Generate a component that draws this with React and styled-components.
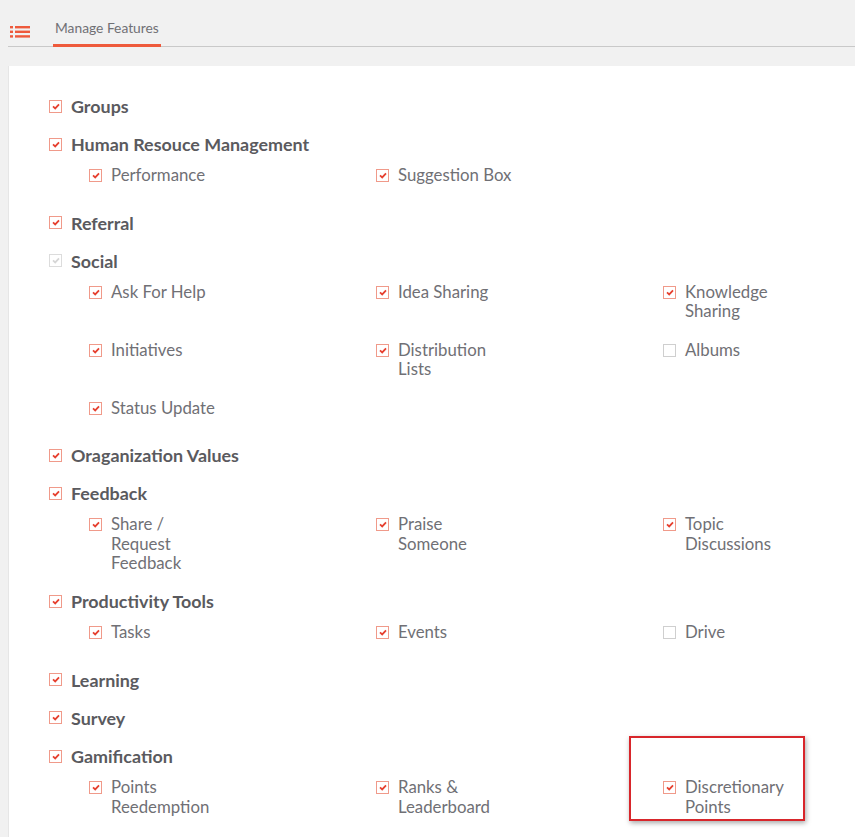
import React from 'react'
import styled, { createGlobalStyle } from 'styled-components'

const GlobalStyle = createGlobalStyle`
  html, body {
    margin: 0;
    padding: 0;
    background: #f1f1f1;
    font-family: Lato, "Open Sans", sans-serif;
  }
`

// each label is a list of lines, the original breaks them short
const sections = [
  { title: 'Groups', checked: true },
  {
    title: 'Human Resouce Management',
    checked: true,
    items: [
      { label: ['Performance'], checked: true },
      { label: ['Suggestion Box'], checked: true },
    ],
  },
  { title: 'Referral', checked: true },
  {
    title: 'Social',
    checked: true,
    disabled: true,
    items: [
      { label: ['Ask For Help'], checked: true },
      { label: ['Idea Sharing'], checked: true },
      { label: ['Knowledge', 'Sharing'], checked: true },
      { label: ['Initiatives'], checked: true },
      { label: ['Distribution', 'Lists'], checked: true },
      { label: ['Albums'], checked: false },
      { label: ['Status Update'], checked: true },
    ],
  },
  { title: 'Oraganization Values', checked: true },
  {
    title: 'Feedback',
    checked: true,
    items: [
      { label: ['Share /', 'Request', 'Feedback'], checked: true },
      { label: ['Praise', 'Someone'], checked: true },
      { label: ['Topic', 'Discussions'], checked: true },
    ],
  },
  {
    title: 'Productivity Tools',
    checked: true,
    items: [
      { label: ['Tasks'], checked: true },
      { label: ['Events'], checked: true },
      { label: ['Drive'], checked: false },
    ],
  },
  { title: 'Learning', checked: true },
  { title: 'Survey', checked: true },
  {
    title: 'Gamification',
    checked: true,
    items: [
      { label: ['Points', 'Reedemption'], checked: true },
      { label: ['Ranks &', 'Leaderboard'], checked: true },
      { label: ['Discretionary', 'Points'], checked: true, highlight: true },
    ],
  },
]

const ListIcon = () => (
  <svg width="20" height="16" viewBox="0 0 20 16" fill="#ee5a3c">
    <rect x="0" y="1" width="3" height="2.4" />
    <rect x="5" y="1" width="15" height="2.4" />
    <rect x="0" y="5.6" width="3" height="2.4" />
    <rect x="5" y="5.6" width="15" height="2.4" />
    <rect x="0" y="10.2" width="3" height="2.4" />
    <rect x="5" y="10.2" width="15" height="2.4" />
  </svg>
)

const Check = ({ checked, disabled }) => (
  <Box $checked={checked} $disabled={disabled}>
    {checked && (
      <svg width="8" height="7" viewBox="0 0 8 7">
        <path
          d="M1 3.4 L3.2 5.4 L7 1.4"
          fill="none"
          stroke={disabled ? '#d6d6d6' : '#e6402f'}
          strokeWidth="1.8"
        />
      </svg>
    )}
  </Box>
)

const App = () => {
  return (
    <>
      <GlobalStyle />
      <Page>
        <TabBar>
          <IconWrap>
            <ListIcon />
          </IconWrap>
          <Tab>Manage Features</Tab>
        </TabBar>
        <Panel>
          {sections.map((section) => (
            <Section key={section.title}>
              <Heading>
                <Check checked={section.checked} disabled={section.disabled} />
                <span>{section.title}</span>
              </Heading>
              {section.items && (
                <ItemGrid>
                  {section.items.map((item) => (
                    <Item key={item.label.join(' ')} $highlight={item.highlight}>
                      <Check checked={item.checked} />
                      <Label>
                        {item.label.map((line) => (
                          <div key={line}>{line}</div>
                        ))}
                      </Label>
                    </Item>
                  ))}
                </ItemGrid>
              )}
            </Section>
          ))}
        </Panel>
      </Page>
    </>
  )
}

const Page = styled.div`
  min-height: 837px;
  display: flex;
  flex-direction: column;
  overflow: hidden;
`

const TabBar = styled.div`
  display: flex;
  align-items: flex-end;
  height: 46px;
  margin-left: 8px;
  border-bottom: 1px solid #c9c9c9;
  gap: 23px;
`

const IconWrap = styled.div`
  display: flex;
  margin-left: 2px;
  padding-bottom: 5px;
`

const Tab = styled.div`
  font-size: 13.8px;
  color: #707075;
  padding: 0 2px 8px 2px;
  border-bottom: 3px solid #ee5a3c;
  margin-bottom: -1px;
`

const Panel = styled.div`
  flex: 1;
  margin: 19px 0 0 8px;
  background: #fff;
  border-left: 1px solid #e6e6e6;
  padding: 30px 0 20px 40px;
  display: flex;
  flex-direction: column;
  gap: 18.3px;
`

const Section = styled.div`
  display: flex;
  flex-direction: column;
`

const Heading = styled.div`
  display: flex;
  align-items: center;
  gap: 9px;
  height: 20px;
  font-size: 17.9px;
  font-weight: 700;
  color: #5a5a5e;
`

const Box = styled.span`
  box-sizing: border-box;
  width: 13px;
  height: 13px;
  flex: none;
  display: flex;
  align-items: center;
  justify-content: center;
  border: 1px solid ${(p) => (p.$disabled ? '#dcdcdc' : p.$checked ? '#f09a8a' : '#cfcfcf')};
  background: #fff;
`

const ItemGrid = styled.div`
  display: grid;
  grid-template-columns: 287px 287px 1fr;
  row-gap: 18px;
  margin: 10px 0 0 40px;
`

const Item = styled.div`
  position: relative;
  display: flex;
  align-items: flex-start;
  gap: 9px;
  min-height: 30px;
  font-size: 16.8px;
  color: #707075;

  > span {
    margin-top: 5px;
  }

  ${(p) =>
    p.$highlight &&
    `
    &::before {
      content: '';
      position: absolute;
      left: -34px;
      top: -40px;
      width: 172px;
      height: 81px;
      border: 2px solid #d8262b;
      box-shadow: 1px 2px 5px rgba(0, 0, 0, 0.35);
      pointer-events: none;
    }
  `}
`

const Label = styled.div`
  line-height: 19.5px;
  margin-top: 1px;
`

export default App
